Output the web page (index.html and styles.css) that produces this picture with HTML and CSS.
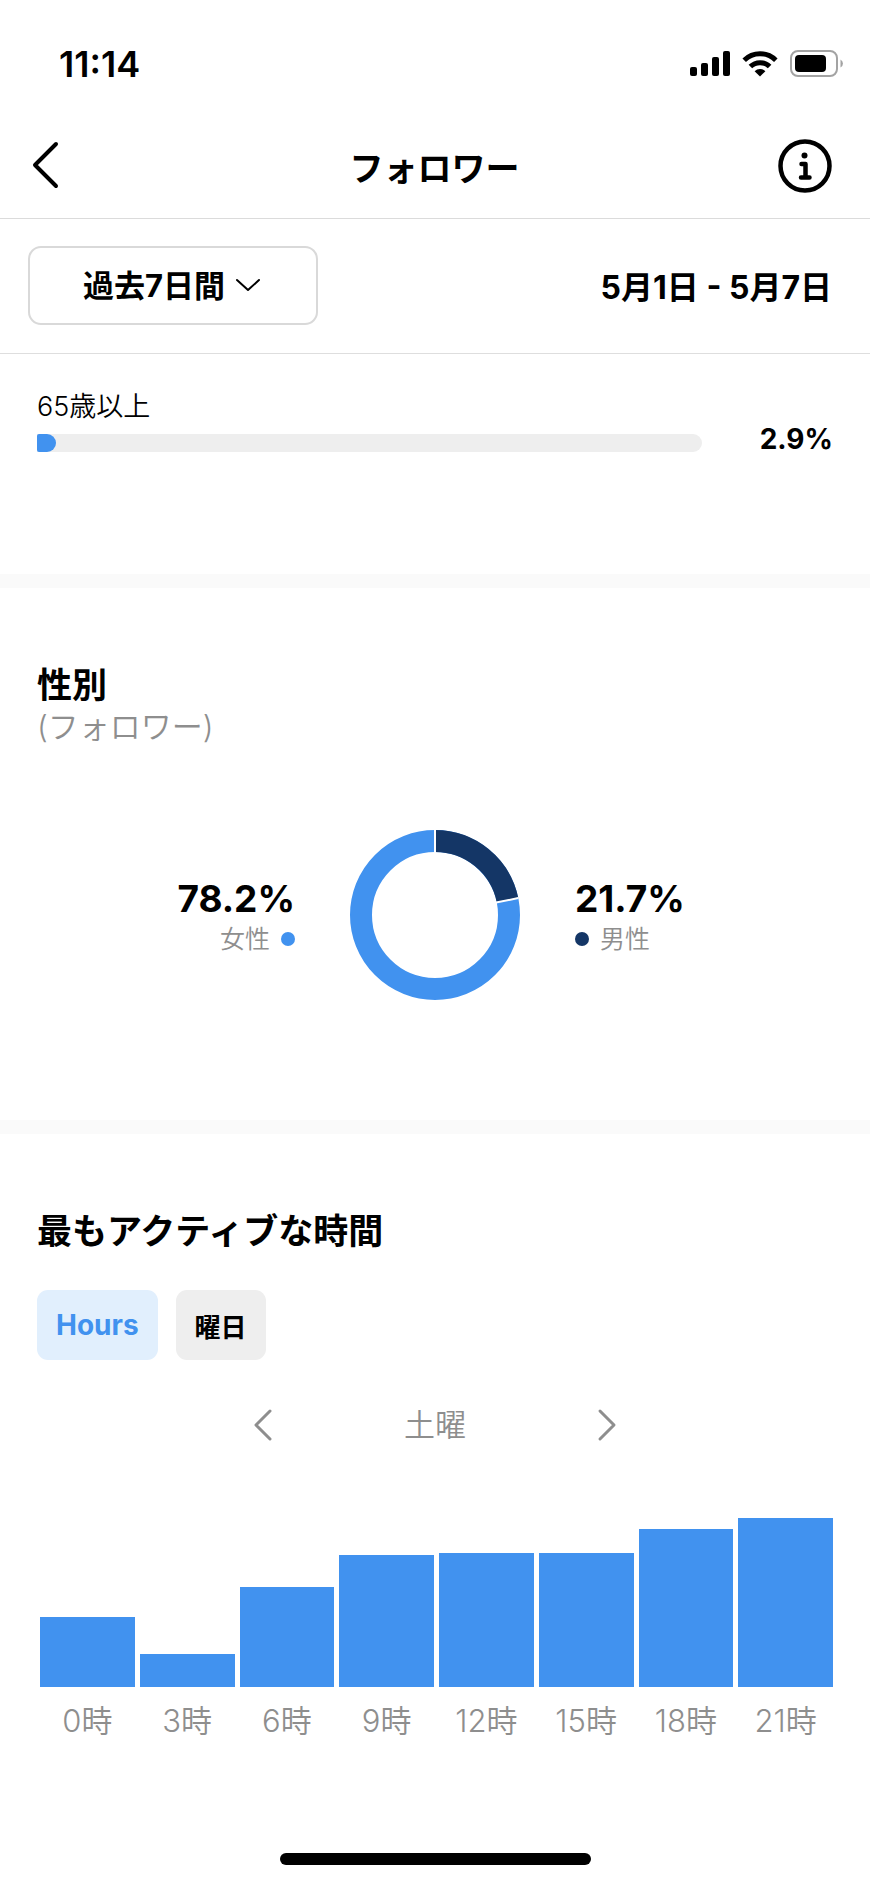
FILE: index.html
```html
<!DOCTYPE html>
<html lang="ja">
<head>
    <meta charset="UTF-8">
    <meta name="viewport" content="width=device-width, initial-scale=1.0">
    <title>フォロワー</title>
    <link rel="stylesheet" href="styles.css">
</head>
<body>
    <div class="status-bar">
        <span class="time">11:14</span>
        <div class="status-icons">
            <svg width="40" height="26" viewBox="0 0 40 26">
                <rect x="0" y="16" width="7" height="9" rx="2"/>
                <rect x="11" y="12" width="7" height="13" rx="2"/>
                <rect x="22" y="6" width="7" height="19" rx="2"/>
                <rect x="33" y="0" width="7" height="25" rx="2"/>
            </svg>
            <svg width="36" height="26" viewBox="0 0 36 26">
                <path d="M2.2 9.2 A22.5 22.5 0 0 1 33.8 9.2" fill="none" stroke="#000" stroke-width="5"/>
                <path d="M8.4 15.6 A13.6 13.6 0 0 1 27.6 15.6" fill="none" stroke="#000" stroke-width="5"/>
                <path d="M18 25.5 L12.6 20.2 A7.6 7.6 0 0 1 23.4 20.2 Z"/>
            </svg>
            <svg width="54" height="28" viewBox="0 0 54 28">
                <rect x="1" y="1" width="46" height="25" rx="7" fill="none" stroke="#a3a3a3" stroke-width="2"/>
                <rect x="5" y="5" width="31" height="17" rx="4"/>
                <path d="M50.5 9.5 A4.5 4.5 0 0 1 50.5 17.5 Z" fill="#a3a3a3"/>
            </svg>
        </div>
    </div>

    <header class="header">
        <button class="icon-btn" aria-label="戻る">
            <svg width="28" height="50" viewBox="0 0 28 50">
                <path d="M25 3 L4 24 L25 45" fill="none" stroke="#000" stroke-width="4" stroke-linecap="round" stroke-linejoin="round"/>
            </svg>
        </button>
        <h1>フォロワー</h1>
        <button class="icon-btn" aria-label="情報">
            <svg width="54" height="54" viewBox="0 0 54 54">
                <circle cx="27" cy="27" r="24.5" fill="none" stroke="#000" stroke-width="4.5"/>
                <circle cx="26.5" cy="16.5" r="3"/>
                <path d="M23.5 25 H27.5 V38 M23 38.5 H31.5" fill="none" stroke="#000" stroke-width="4.5" stroke-linecap="round" stroke-linejoin="round"/>
            </svg>
        </button>
    </header>

    <div class="filter">
        <div class="period">
            <select class="period-select" aria-label="期間">
                <option>過去7日間</option>
                <option>過去30日間</option>
            </select>
            <svg class="period-arrow" width="24" height="14" viewBox="0 0 24 14">
                <path d="M1 2 L12 12 L23 2" fill="none" stroke="#000" stroke-width="2" stroke-linecap="round" stroke-linejoin="round"/>
            </svg>
        </div>
        <span class="dates">5月1日 - 5月7日</span>
    </div>

    <section class="age">
        <div class="age-bar">
            <div class="age-label">65歳以上</div>
            <div class="track"><div class="fill" style="width: 2.9%"></div></div>
        </div>
        <div class="age-value">2.9%</div>
    </section>

    <section class="gender">
        <h2>性別</h2>
        <p class="subtitle">(フォロワー)</p>
        <div class="gender-chart">
            <div class="legend female">
                <div class="percent">78.2%</div>
                <div class="legend-label">女性<span class="dot"></span></div>
            </div>
            <svg width="170" height="170" viewBox="0 0 170 170">
                <circle cx="85" cy="85" r="74" fill="none" stroke="#4192ef" stroke-width="22"/>
                <circle cx="85" cy="85" r="74" fill="none" stroke="#143666" stroke-width="22" pathLength="100" stroke-dasharray="21.7 78.3" transform="rotate(-90 85 85)"/>
                <path d="M85 24 V0" stroke="#fff" stroke-width="2"/>
                <path d="M85 24 V0" stroke="#fff" stroke-width="2" transform="rotate(78.5 85 85)"/>
            </svg>
            <div class="legend male">
                <div class="percent">21.7%</div>
                <div class="legend-label"><span class="dot"></span>男性</div>
            </div>
        </div>
    </section>

    <section class="active-time">
        <h2>最もアクティブな時間</h2>
        <div class="tabs">
            <button class="tab selected">Hours</button>
            <button class="tab">曜日</button>
        </div>
        <div class="day-nav">
            <button class="icon-btn" aria-label="前の曜日">
                <svg width="20" height="34" viewBox="0 0 20 34">
                    <path d="M17 3 L3 17 L17 31" fill="none" stroke="#8e8e8e" stroke-width="3" stroke-linecap="round" stroke-linejoin="round"/>
                </svg>
            </button>
            <span class="day">土曜</span>
            <button class="icon-btn" aria-label="次の曜日">
                <svg width="20" height="34" viewBox="0 0 20 34">
                    <path d="M3 3 L17 17 L3 31" fill="none" stroke="#8e8e8e" stroke-width="3" stroke-linecap="round" stroke-linejoin="round"/>
                </svg>
            </button>
        </div>
        <div class="chart">
            <div class="col"><div class="bar" style="height: 70px"></div><span>0時</span></div>
            <div class="col"><div class="bar" style="height: 33px"></div><span>3時</span></div>
            <div class="col"><div class="bar" style="height: 100px"></div><span>6時</span></div>
            <div class="col"><div class="bar" style="height: 132px"></div><span>9時</span></div>
            <div class="col"><div class="bar" style="height: 134px"></div><span>12時</span></div>
            <div class="col"><div class="bar" style="height: 134px"></div><span>15時</span></div>
            <div class="col"><div class="bar" style="height: 158px"></div><span>18時</span></div>
            <div class="col"><div class="bar" style="height: 169px"></div><span>21時</span></div>
        </div>
    </section>

    <div class="home-indicator"></div>
</body>
</html>
```
FILE: styles.css
```css
* {
    box-sizing: border-box;
}

body {
    font-family: Inter, "Noto Sans CJK JP", sans-serif;
    background-color: #fff;
    color: #000;
    margin: 0;
    min-height: 100vh;
    display: flex;
    flex-direction: column;
}

svg {
    display: block;
}

h1,
h2,
p {
    margin: 0;
}

h1,
h2 {
    font-size: 34px;
    line-height: 42px;
    font-weight: 600;
}

h2 {
    font-size: 35px;
}

button,
select {
    font-family: inherit;
    color: inherit;
    cursor: pointer;
}

.icon-btn {
    background: none;
    border: none;
    padding: 0;
}

/* status bar */
.status-bar {
    display: flex;
    justify-content: space-between;
    align-items: center;
    height: 112px;
    padding: 16px 26px 0 59px;
}

.time {
    font-size: 36px;
    font-weight: 600;
}

.status-icons {
    display: flex;
    align-items: center;
    gap: 12px;
}

/* header */
.header {
    display: flex;
    justify-content: space-between;
    align-items: center;
    height: 107px;
    padding: 2px 38px 0 31px;
    border-bottom: 1px solid #dbdbdb;
}

.header .icon-btn {
    width: 54px;
}

.header h1 {
    padding: 6px 0 0 6px;
}

.filter {
    display: flex;
    justify-content: space-between;
    align-items: center;
    height: 135px;
    padding: 0 38px 2px 28px;
    border-bottom: 1px solid #dedede;
}

.period {
    position: relative;
}

.period-select {
    appearance: none;
    width: 290px;
    height: 79px;
    padding: 0 53px;
    background-color: #fff;
    border: 2px solid #d9d9d9;
    border-radius: 13px;
    font-size: 31px;
    font-weight: 700;
}

.period-arrow {
    position: absolute;
    top: 32px;
    right: 58px;
    pointer-events: none;
}

.dates {
    font-size: 32px;
    font-weight: 700;
}

/* age */
.age {
    display: flex;
    align-items: flex-end;
    gap: 36px;
    padding: 35px 37px 122px;
}

.age-bar {
    flex: 1;
}

.age-label {
    font-size: 27px;
    line-height: 36px;
    font-weight: 350;
    margin-bottom: 9px;
}

.track {
    height: 18px;
    background-color: #eee;
    border-radius: 0 9px 9px 0;
}

.fill {
    height: 100%;
    background-color: #4192ef;
    border-radius: 2px 9px 9px 2px;
}

.age-value {
    width: 95px;
    font-size: 28px;
    line-height: 26px;
    font-weight: 700;
    text-align: right;
}

/* gender */
.gender,
.active-time {
    padding: 76px 37px 0;
    border-top: 14px solid #fafafa;
}

.gender {
    padding-bottom: 120px;
}

.subtitle {
    font-size: 31px;
    line-height: 42px;
    font-weight: 350;
    color: #8e8e8e;
}

.gender-chart {
    display: grid;
    grid-template-columns: 1fr 170px 1fr;
    align-items: center;
    gap: 55px;
    margin-top: 82px;
}

.legend {
    padding-top: 3px;
}

.percent {
    font-size: 37px;
    line-height: 44px;
    font-weight: 700;
}

.legend-label {
    display: flex;
    align-items: center;
    gap: 11px;
    font-size: 25px;
    line-height: 36px;
    font-weight: 350;
    color: #8e8e8e;
}

.female {
    text-align: right;
}

.female .legend-label {
    justify-content: flex-end;
}

.dot {
    width: 14px;
    height: 14px;
    border-radius: 50%;
    background-color: #4192ef;
}

.male .dot {
    background-color: #143666;
}

/* active time */
.tabs {
    display: flex;
    gap: 18px;
    margin-top: 38px;
}

.tab {
    height: 70px;
    padding: 0 19px;
    background-color: #eee;
    border: none;
    border-radius: 11px;
    font-size: 26px;
    font-weight: 700;
}

.tab.selected {
    background-color: #e1effd;
    color: #4192ef;
    font-size: 28px;
}

.day-nav {
    display: flex;
    justify-content: space-between;
    align-items: center;
    width: 364px;
    margin: 44px auto 0;
}

.day {
    font-size: 31px;
    line-height: 42px;
    font-weight: 350;
    color: #8e8e8e;
}

.chart {
    display: flex;
    align-items: flex-end;
    gap: 5px;
    margin: 72px 0 0 3px;
}

.col {
    flex: 1;
    text-align: center;
    font-size: 31px;
    line-height: 36px;
    font-weight: 350;
    color: #8e8e8e;
}

.bar {
    background-color: #4192ef;
    margin-bottom: 16px;
}

.home-indicator {
    width: 311px;
    height: 12px;
    margin: auto auto 19px;
    background-color: #000;
    border-radius: 6px;
}
```
